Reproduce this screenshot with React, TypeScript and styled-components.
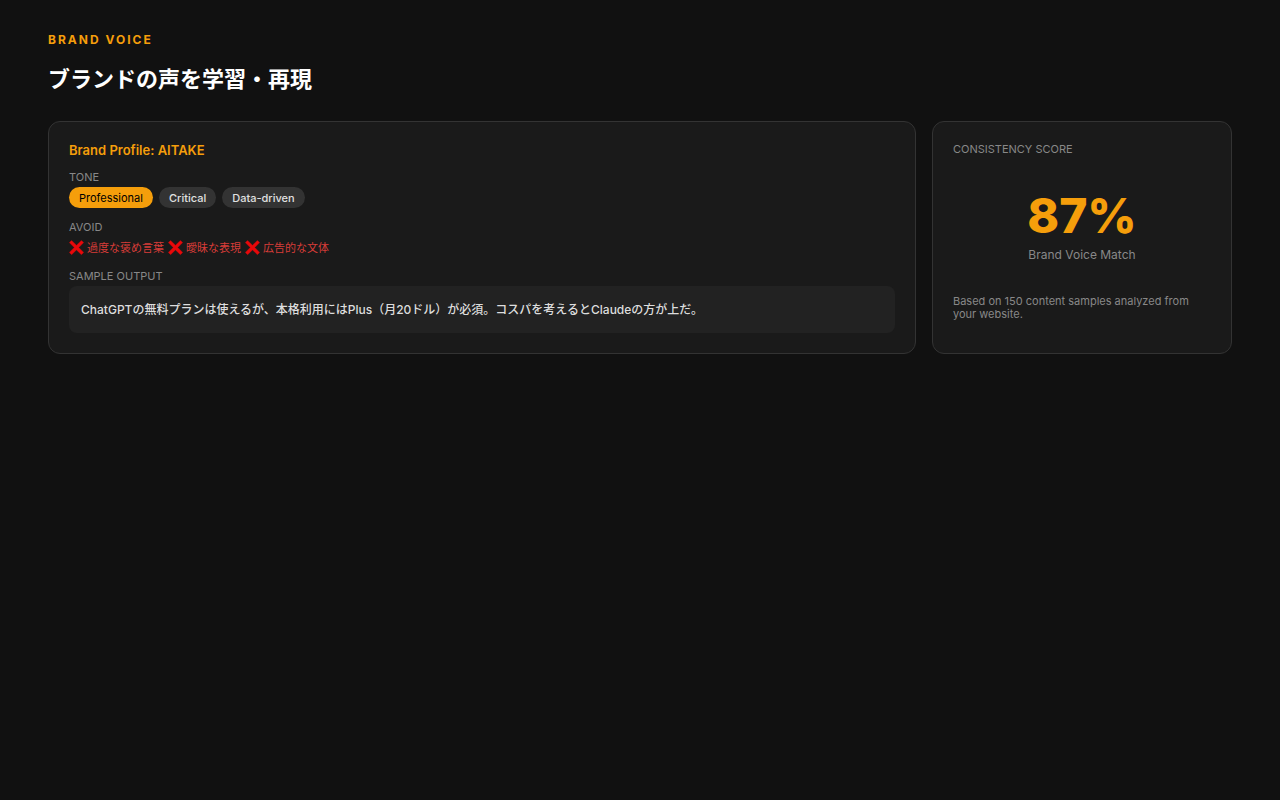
import React from "react";
import styled, { createGlobalStyle } from "styled-components";

const GlobalStyle = createGlobalStyle`
  *, *::before, *::after { box-sizing: border-box; }
  body {
    margin: 0;
    background: #111111;
    color: #ffffff;
    font-family: Inter, "Noto Sans CJK JP", sans-serif;
  }
`;

const Page = styled.main`
  padding: 32px 48px;
`;

const Eyebrow = styled.p`
  margin: 0 0 16px;
  font-size: 12px;
  line-height: 15px;
  font-weight: 700;
  letter-spacing: 2px;
  color: #f59e0b;
`;

const Title = styled.h1`
  margin: 0 0 26px;
  font-size: 22px;
  line-height: 32px;
  font-weight: 700;
`;

const Grid = styled.div`
  display: grid;
  grid-template-columns: minmax(0, 1fr) 300px;
  gap: 16px;
`;

const Card = styled.section`
  padding: 20px;
  border: 1px solid #333333;
  border-radius: 12px;
  background: #1a1a1a;
`;

const CardTitle = styled.h2`
  margin: 0 0 12px;
  font-size: 13px;
  line-height: 16px;
  font-weight: 600;
  color: #f59e0b;
`;

const Field = styled.div`
  & + & {
    margin-top: 12px;
  }
`;

const Label = styled.h3`
  margin: 0;
  font-size: 11px;
  line-height: 15px;
  font-weight: 400;
  color: #888888;
`;

const TagList = styled.ul`
  display: flex;
  flex-wrap: wrap;
  gap: 6px;
  margin: 2px 0 0;
  padding: 0;
  list-style: none;
`;

const Tag = styled.li<{ $active?: boolean }>`
  padding: 4px 10px 2px;
  border-radius: 12px;
  font-size: 11px;
  line-height: 15px;
  font-weight: ${({ $active }) => ($active ? 400 : 500)};
  color: ${({ $active }) => ($active ? "#000000" : "#e0e0e0")};
  background: ${({ $active }) => ($active ? "#f59e0b" : "#333333")};
`;

const AvoidList = styled.ul`
  display: flex;
  flex-wrap: wrap;
  gap: 4px;
  margin: 4px 0 0;
  padding: 0;
  list-style: none;
  font-size: 11px;
  line-height: 18px;
  color: #d63c38;
`;

const AvoidItem = styled.li`
  display: flex;
  align-items: center;
  gap: 3px;
`;

const Sample = styled.p`
  margin: 2px 0 0;
  padding: 12px;
  border-radius: 8px;
  font-size: 12px;
  line-height: 23px;
  font-weight: 500;
  color: #dddddd;
  background: #222222;
`;

const Score = styled.div`
  padding: 30px 0 32px;
  text-align: center;
`;

const ScoreValue = styled.div`
  margin-bottom: 2px;
  font-size: 48px;
  line-height: 58px;
  font-weight: 800;
  color: #f59e0b;
`;

const ScoreCaption = styled.div`
  font-size: 12px;
  line-height: 16px;
  color: #888888;
`;

const Note = styled.p`
  margin: 0;
  font-size: 11px;
  line-height: 13px;
  color: #888888;
`;

const CrossMark = () => (
  <svg width="15" height="16" viewBox="0 0 15 16" aria-hidden="true">
    <path
      d="M2.6.4 7.5 5.2 12.4.4 14.7 2.6 9.8 7.5 14.7 12.4 12.4 14.7 7.5 9.9 2.6 14.7.3 12.4 5.2 7.5.3 2.6Z"
      fill="#e8080a"
      stroke="#c40d0d"
      strokeWidth="0.4"
      strokeLinejoin="round"
    />
  </svg>
);

const tones = ["Professional", "Critical", "Data-driven"];
const avoided = ["過度な褒め言葉", "曖昧な表現", "広告的な文体"];

export default function App() {
  return (
    <Page lang="ja">
      <GlobalStyle />
      <Eyebrow>BRAND VOICE</Eyebrow>
      <Title>ブランドの声を学習・再現</Title>
      <Grid>
        <Card>
          <CardTitle>Brand Profile: AITAKE</CardTitle>
          <Field>
            <Label>TONE</Label>
            <TagList>
              {tones.map((tone, i) => (
                <Tag key={tone} $active={i === 0}>{tone}</Tag>
              ))}
            </TagList>
          </Field>
          <Field>
            <Label>AVOID</Label>
            <AvoidList>
              {avoided.map((item) => (
                <AvoidItem key={item}>
                  <CrossMark />
                  {item}
                </AvoidItem>
              ))}
            </AvoidList>
          </Field>
          <Field>
            <Label>SAMPLE OUTPUT</Label>
            <Sample>
              ChatGPTの無料プランは使えるが、本格利用にはPlus（月20ドル）が必須。コスパを考えるとClaudeの方が上だ。
            </Sample>
          </Field>
        </Card>
        <Card>
          <Label>CONSISTENCY SCORE</Label>
          <Score>
            <ScoreValue>87%</ScoreValue>
            <ScoreCaption>Brand Voice Match</ScoreCaption>
          </Score>
          <Note>Based on 150 content samples analyzed from your website.</Note>
        </Card>
      </Grid>
    </Page>
  );
}
